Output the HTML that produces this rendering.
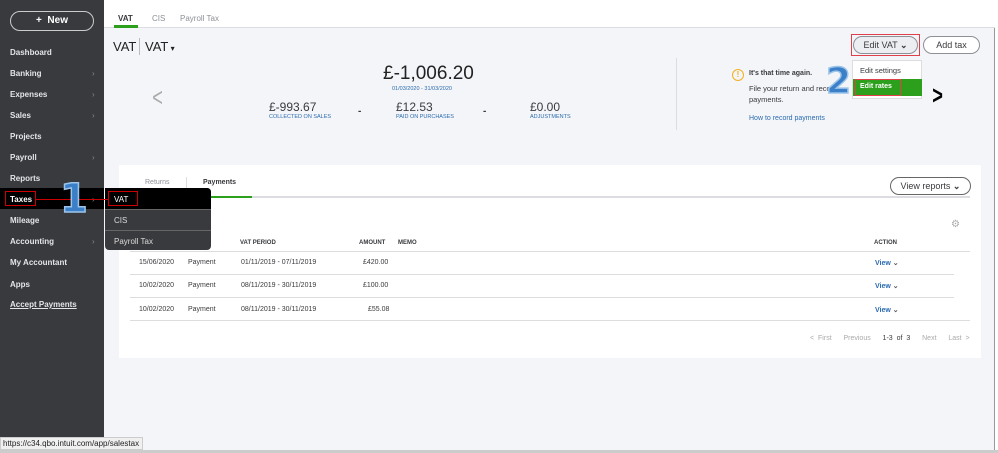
<!DOCTYPE html>
<html><head><meta charset="utf-8"><style>
*{box-sizing:border-box;margin:0;padding:0}
body{width:998px;height:453px;overflow:hidden;background:#fff;font-family:"Liberation Sans",sans-serif;position:relative;color:#393a3d}
.abs{position:absolute}
#side{left:0;top:0;width:104px;height:450px;background:#393a3d;color:#e3e5e8;font-size:8px;font-weight:bold}
#side .it{position:absolute;left:10px}
#side .ch{position:absolute;left:92px;color:#888;font-size:8px;font-weight:normal}
#main{left:104px;top:0;width:891px;height:450px;background:#f4f5f8;border-right:1px solid #999}
#top{left:104px;top:0;width:891px;height:28px;background:#fff;border-bottom:1px solid #dcdde0}
.s{font-size:7px;color:#393a3d}
.blue{color:#2a6bb0}
.num{font-weight:bold;color:#3a7fc8;-webkit-text-stroke:1.5px #9cc4ea;font-family:"DejaVu Sans",sans-serif}
</style></head><body>
<div id="main" class="abs"></div>
<div id="top" class="abs">
 <div class="abs" style="left:14px;top:14px;font-size:8px;font-weight:bold">VAT</div>
 <div class="abs" style="left:10px;top:25px;width:24px;height:3px;background:#2ca01c"></div>
 <div class="abs" style="left:48px;top:14px;font-size:8px;color:#8d9096">CIS</div>
 <div class="abs" style="left:76px;top:14px;font-size:8px;color:#8d9096">Payroll Tax</div>
</div>
<div id="side" class="abs">
 <div class="abs" style="left:10px;top:11px;width:84px;height:20px;border:1.5px solid #ccc;border-radius:11px;color:#fff;font-size:10px;text-align:center;line-height:17px">+&nbsp; New</div>
 <div class="it" style="top:48px">Dashboard</div>
 <div class="it" style="top:69px">Banking</div><div class="ch" style="top:69px">›</div>
 <div class="it" style="top:90px">Expenses</div><div class="ch" style="top:90px">›</div>
 <div class="it" style="top:111px">Sales</div><div class="ch" style="top:111px">›</div>
 <div class="it" style="top:132px">Projects</div>
 <div class="it" style="top:153px">Payroll</div><div class="ch" style="top:153px">›</div>
 <div class="it" style="top:174px">Reports</div>
 <div class="abs" style="left:0;top:188px;width:104px;height:21px;background:#000"></div>
 <div class="abs" style="left:5px;top:191px;width:31px;height:15px;border:1px solid #c00"></div>
 <div class="it" style="top:195px;color:#fff">Taxes</div><div class="ch" style="top:195px">›</div>
 <div class="it" style="top:216px">Mileage</div>
 <div class="it" style="top:237px">Accounting</div><div class="ch" style="top:237px">›</div>
 <div class="it" style="top:258px">My Accountant</div>
 <div class="it" style="top:280px">Apps</div>
 <div class="it" style="top:300px;text-decoration:underline">Accept Payments</div>
</div>
<!-- header -->
<div class="abs" style="left:113px;top:39px;font-size:13px;color:#222">VAT</div>
<div class="abs" style="left:139px;top:38px;width:1px;height:17px;background:#bbb"></div>
<div class="abs" style="left:145px;top:39px;font-size:13px;color:#222">VAT<span style="font-size:8px"> ▾</span></div>
<div class="abs" style="left:150px;top:82px;font-size:26px;color:#aaa;transform:scaleX(.7)">&lt;</div>
<div class="abs" style="left:930px;top:80px;font-size:26px;color:#000;font-weight:bold;transform:scaleX(.7)">&gt;</div>
<div class="abs" style="left:383px;top:63px;font-size:19px;color:#222">£-1,006.20</div>
<div class="abs blue" style="left:392px;top:86px;font-size:5.5px">01/03/2020 - 31/03/2020</div>
<div class="abs" style="left:269px;top:100px;font-size:12px">£-993.67</div>
<div class="abs blue" style="left:269px;top:114px;font-size:5.5px">COLLECTED ON SALES</div>
<div class="abs" style="left:358px;top:106px;font-size:10px;font-weight:bold">-</div>
<div class="abs" style="left:396px;top:100px;font-size:12px">£12.53</div>
<div class="abs blue" style="left:396px;top:114px;font-size:5.5px">PAID ON PURCHASES</div>
<div class="abs" style="left:483px;top:106px;font-size:10px;font-weight:bold">-</div>
<div class="abs" style="left:530px;top:100px;font-size:12px">£0.00</div>
<div class="abs blue" style="left:530px;top:114px;font-size:5.5px">ADJUSTMENTS</div>
<div class="abs" style="left:676px;top:58px;width:1px;height:72px;background:#ddd"></div>
<div class="abs" style="left:732px;top:69px;width:12px;height:12px;border:1.5px solid #f2b01e;border-radius:50%;color:#f2b01e;font-size:8px;text-align:center;line-height:9px;font-weight:bold">!</div>
<div class="abs" style="left:749px;top:70px;font-size:7px;font-weight:bold">It's that time again.</div>
<div class="abs" style="left:749px;top:83px;font-size:7.5px;line-height:11px">File your return and record<br>payments.</div>
<div class="abs blue" style="left:749px;top:115px;font-size:7px">How to record payments</div>
<!-- buttons -->
<div class="abs" style="left:853px;top:36px;width:65px;height:18px;border:1px solid #8d9096;border-radius:9px;background:#eceef1;font-size:9px;text-align:center;line-height:16px">Edit VAT <b>⌄</b></div>
<div class="abs" style="left:851px;top:34px;width:69px;height:22px;border:1px solid #e0404a"></div>
<div class="abs" style="left:923px;top:36px;width:57px;height:18px;border:1px solid #8d9096;border-radius:9px;background:#fff;font-size:9px;text-align:center;line-height:16px">Add tax</div>
<div class="abs" style="left:852px;top:60px;width:70px;height:39px;background:#fff;border:1px solid #ddd"></div>
<div class="abs" style="left:860px;top:66px;font-size:7.5px">Edit settings</div>
<div class="abs" style="left:853px;top:79px;width:69px;height:17px;background:#2ca01c"></div>
<div class="abs" style="left:855px;top:79px;width:46px;height:17px;border:1px solid #e0404a"></div>
<div class="abs" style="left:860px;top:83px;font-size:7px;color:#fff;font-weight:bold">Edit rates</div>
<div class="abs num" style="left:826px;top:62px;font-size:36px;line-height:40px">2</div>
<!-- card -->
<div class="abs" style="left:119px;top:165px;width:862px;height:193px;background:#fff"></div>
<div class="abs" style="left:145px;top:179px;font-size:7px;color:#8d9096">Returns</div>
<div class="abs" style="left:186px;top:177px;width:1px;height:12px;background:#ddd"></div>
<div class="abs" style="left:203px;top:179px;font-size:7px;font-weight:bold">Payments</div>
<div class="abs" style="left:130px;top:196px;width:840px;height:2px;background:#dcdde0"></div>
<div class="abs" style="left:188px;top:196px;width:64px;height:2px;background:#2ca01c"></div>
<div class="abs" style="left:890px;top:177px;width:81px;height:18px;border:1px solid #666;border-radius:9px;font-size:9px;text-align:center;line-height:16px">View reports <b>⌄</b></div>
<div class="abs" style="left:951px;top:219px;font-size:10px;color:#aaa">⚙</div>
<div class="abs" style="left:240px;top:240px;font-size:6px;font-weight:bold">VAT PERIOD</div>
<div class="abs" style="left:359px;top:240px;font-size:6px;font-weight:bold">AMOUNT</div>
<div class="abs" style="left:398px;top:240px;font-size:6px;font-weight:bold">MEMO</div>
<div class="abs" style="left:874px;top:240px;font-size:6px;font-weight:bold">ACTION</div>
<div class="abs" style="left:130px;top:251px;width:840px;height:1px;background:#ddd"></div>
<div class="abs" style="left:130px;top:274px;width:824px;height:1px;background:#ddd"></div>
<div class="abs" style="left:130px;top:297px;width:824px;height:1px;background:#ddd"></div>
<div class="abs" style="left:130px;top:320px;width:840px;height:1px;background:#ddd"></div>
<div class="abs s" style="left:139px;top:259px">15/06/2020</div><div class="abs s" style="left:188px;top:259px">Payment</div><div class="abs s" style="left:241px;top:259px">01/11/2019 - 07/11/2019</div><div class="abs s" style="left:363px;top:259px">£420.00</div><div class="abs blue" style="left:875px;top:259px;font-size:7px;font-weight:bold">View <span style="color:#555">⌄</span></div>
<div class="abs s" style="left:139px;top:282px">10/02/2020</div><div class="abs s" style="left:188px;top:282px">Payment</div><div class="abs s" style="left:241px;top:282px">08/11/2019 - 30/11/2019</div><div class="abs s" style="left:363px;top:282px">£100.00</div><div class="abs blue" style="left:875px;top:282px;font-size:7px;font-weight:bold">View <span style="color:#555">⌄</span></div>
<div class="abs s" style="left:139px;top:306px">10/02/2020</div><div class="abs s" style="left:188px;top:306px">Payment</div><div class="abs s" style="left:241px;top:306px">08/11/2019 - 30/11/2019</div><div class="abs s" style="left:368px;top:306px">£55.08</div><div class="abs blue" style="left:875px;top:306px;font-size:7px;font-weight:bold">View <span style="color:#555">⌄</span></div>
<div class="abs" style="left:810px;top:335px;font-size:7px;color:#aaa;word-spacing:2px">&lt; First &nbsp; Previous &nbsp; <span style="color:#393a3d">1-3 of 3</span> &nbsp; Next &nbsp; Last &gt;</div>
<!-- flyout -->
<div class="abs" style="left:105px;top:188px;width:106px;height:62px;background:#393a3d;border-radius:0 4px 4px 4px"></div>
<div class="abs" style="left:105px;top:188px;width:106px;height:21px;background:#000;border-radius:0 4px 0 0"></div>
<div class="abs" style="left:108px;top:191px;width:30px;height:15px;border:1px solid #c00"></div>
<div class="abs" style="left:114px;top:195px;font-size:8px;color:#fff">VAT</div>
<div class="abs" style="left:105px;top:209px;width:106px;height:1px;background:#666"></div>
<div class="abs" style="left:114px;top:216px;font-size:8px;color:#ddd">CIS</div>
<div class="abs" style="left:105px;top:230px;width:106px;height:1px;background:#666"></div>
<div class="abs" style="left:114px;top:237px;font-size:8px;color:#ddd">Payroll Tax</div>
<div class="abs" style="left:36px;top:199px;width:72px;height:1px;background:#c00"></div>
<div class="abs num" style="left:60px;top:178px;font-size:40px;line-height:42px">1</div>
<!-- status bar -->
<div class="abs" style="left:0;top:437px;width:143px;height:13px;background:#f0f0f0;border:1px solid #ccc;font-size:8px;color:#222;line-height:11px;padding-left:2px">https://c34.qbo.intuit.com/app/salestax</div>
<div class="abs" style="left:0;top:450px;width:998px;height:3px;background:#ccc"></div>
</body></html>
